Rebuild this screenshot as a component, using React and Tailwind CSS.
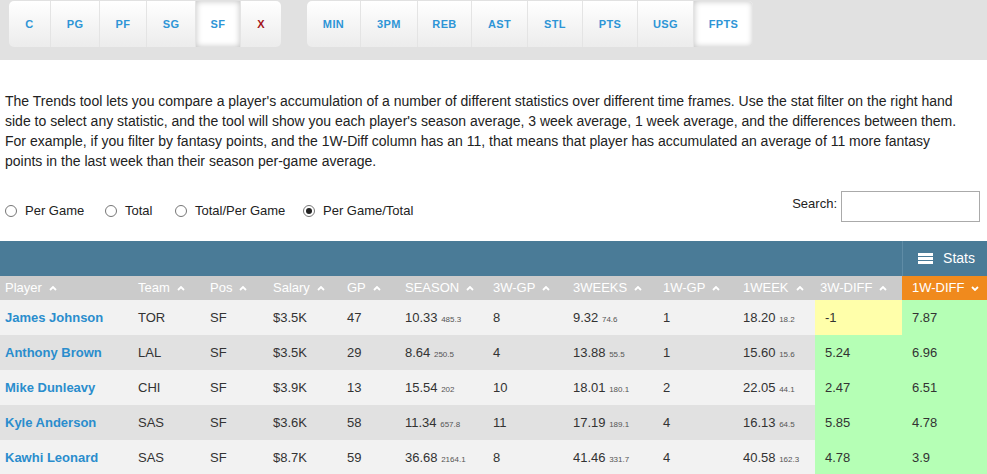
import { useState } from "react";

const POS = [
  { k: "C", w: "w-[41px]" },
  { k: "PG", w: "w-[49px]" },
  { k: "PF", w: "w-[47px]" },
  { k: "SG", w: "w-[49px]" },
  { k: "SF", w: "w-[45px]", on: true },
  { k: "X", w: "w-[41px]", red: true },
];

const STATS = [
  { k: "MIN", w: "w-[53px]" },
  { k: "3PM", w: "w-[57px]" },
  { k: "REB", w: "w-[54px]" },
  { k: "AST", w: "w-[56px]" },
  { k: "STL", w: "w-[55px]" },
  { k: "PTS", w: "w-[55px]" },
  { k: "USG", w: "w-[56px]" },
  { k: "FPTS", w: "w-[60px]", on: true },
];

const COLS = [
  ["Player", 133], ["Team", 72], ["Pos", 63], ["Salary", 74], ["GP", 58], ["SEASON", 88],
  ["3W-GP", 80], ["3WEEKS", 90], ["1W-GP", 80], ["1WEEK", 77], ["3W-DIFF", 87], ["1W-DIFF", 85],
];

const ROWS = [
  { name: "James Johnson", team: "TOR", sal: "$3.5K", gp: 47, s: ["10.33", "485.3"], gp3: 8, w3: ["9.32", "74.6"], gp1: 1, w1: ["18.20", "18.2"], d3: "-1", d1: "7.87" },
  { name: "Anthony Brown", team: "LAL", sal: "$3.5K", gp: 29, s: ["8.64", "250.5"], gp3: 4, w3: ["13.88", "55.5"], gp1: 1, w1: ["15.60", "15.6"], d3: "5.24", d1: "6.96" },
  { name: "Mike Dunleavy", team: "CHI", sal: "$3.9K", gp: 13, s: ["15.54", "202"], gp3: 10, w3: ["18.01", "180.1"], gp1: 2, w1: ["22.05", "44.1"], d3: "2.47", d1: "6.51" },
  { name: "Kyle Anderson", team: "SAS", sal: "$3.6K", gp: 58, s: ["11.34", "657.8"], gp3: 11, w3: ["17.19", "189.1"], gp1: 4, w1: ["16.13", "64.5"], d3: "5.85", d1: "4.78" },
  { name: "Kawhi Leonard", team: "SAS", sal: "$8.7K", gp: 59, s: ["36.68", "2164.1"], gp3: 8, w3: ["41.46", "331.7"], gp1: 4, w1: ["40.58", "162.3"], d3: "4.78", d1: "3.9" },
];

const MODES = [
  { k: "Per Game", w: "w-[100px]" },
  { k: "Total", w: "w-[70px]" },
  { k: "Total/Per Game", w: "w-[128px]" },
  { k: "Per Game/Total", w: "w-auto" },
];

const Caret = ({ down }) => (
  <svg width="8" height="5" viewBox="0 0 8 5" className="inline-block ml-[7px] align-middle">
    <polyline points={down ? "1,1 4,4 7,1" : "1,4 4,1 7,4"} fill="none" stroke="white" strokeWidth="1.8" />
  </svg>
);

const Num = ({ v }) => (
  <span>{v[0]} <span className="text-[8px] text-[#555]">{v[1]}</span></span>
);

function BtnGroup({ items }) {
  return (
    <div className="flex h-[46px] rounded-[5px] overflow-hidden bg-gradient-to-b from-white to-[#ececec]">
      {items.map((b, i) => (
        <div key={b.k}
          className={`${b.w} flex items-center justify-center text-[11px] font-bold tracking-[0.4px] ${i > 0 ? "border-l border-[#e4e4e4]" : ""} ${b.on ? "bg-white shadow-[inset_0_0_6px_rgba(0,0,0,0.25)]" : ""} ${b.red ? "text-[#a3151a]" : "text-[#2e95d6]"}`}>
          {b.k}
        </div>
      ))}
    </div>
  );
}

export default function App() {
  const [mode, setMode] = useState(3);

  return (
    <div className="w-[987px] h-[474px] overflow-hidden bg-white font-['Liberation_Sans',Arial,sans-serif] text-[#222]">
      {/* Filters */}
      <div className="h-[60px] bg-[#e1e1e1] flex items-start gap-[26px] pl-[9px] pt-px">
        <BtnGroup items={POS} />
        <BtnGroup items={STATS} />
      </div>

      {/* Description */}
      <p className="mt-[31px] px-[5px] text-[14px] leading-[20px] text-[#222]">
        The Trends tool lets you compare a player's accumulation of a number of different statistics over different time frames. Use the stat filter on the right hand<br />
        side to select any statistic, and the tool will show you each player's season average, 3 week average, 1 week average, and the differences between them.<br />
        For example, if you filter by fantasy points, and the 1W-Diff column has an 11, that means that player has accumulated an average of 11 more fantasy<br />
        points in the last week than their season per-game average.
      </p>

      {/* Options + search */}
      <div className="flex items-start justify-between mt-[20px] h-[50px] pl-[5px] pr-[7px]">
        <div className="flex items-center mt-[10px] text-[13px] text-[#222]">
          {MODES.map((m, i) => (
            <label key={m.k} className={`${m.w} flex items-center gap-[8px] cursor-pointer`} onClick={() => setMode(i)}>
              <span className="w-[12px] h-[12px] rounded-full border border-[#767676] bg-white flex items-center justify-center">
                {mode === i && <span className="w-[6px] h-[6px] rounded-full bg-[#222]" />}
              </span>
              {m.k}
            </label>
          ))}
        </div>
        <div className="flex items-start gap-[4px] text-[13px]">
          <span className="mt-[3px]">Search:</span>
          <input className="w-[139px] h-[31px] border border-[#aaa] outline-none px-1" />
        </div>
      </div>

      {/* Table */}
      <div className="flex h-[35px] bg-[#4a7b97]">
        <div className="w-[902px]" />
        <div className="flex-1 border-l border-[#5f8ca6] flex items-center justify-end pr-[12px] gap-[10px] text-white text-[14px]">
          <div className="flex flex-col gap-px w-[15px]">
            <span className="h-[3px] bg-white" />
            <span className="h-[3px] bg-white" />
            <span className="h-[3px] bg-white" />
          </div>
          Stats
        </div>
      </div>
      <table className="table-fixed w-[987px] border-collapse text-[13px]">
        <colgroup>
          {COLS.map(([h, w]) => <col key={h} style={{ width: w }} />)}
        </colgroup>
        <thead>
          <tr className="h-[24px] bg-[#cbcbcb] text-white">
            {COLS.map(([h], i) => (
              <th key={h} className={`text-left font-normal pl-[5px] whitespace-nowrap ${i === 11 ? "bg-[#f08a1d] font-bold pl-[10px]" : ""}`}>
                {h}<Caret down={i === 11} />
              </th>
            ))}
          </tr>
        </thead>
        <tbody className="text-[#333]">
          {ROWS.map((r, i) => (
            <tr key={r.name} className={`h-[35px] ${i % 2 ? "bg-[#e1e1e1]" : "bg-[#f2f2f2]"}`}>
              <td className="pl-[5px] font-bold text-[#2a8dcd] whitespace-nowrap">{r.name}</td>
              <td className="pl-[5px]">{r.team}</td>
              <td className="pl-[5px]">SF</td>
              <td className="pl-[5px]">{r.sal}</td>
              <td className="pl-[5px]">{r.gp}</td>
              <td className="pl-[5px] whitespace-nowrap"><Num v={r.s} /></td>
              <td className="pl-[5px]">{r.gp3}</td>
              <td className="pl-[5px] whitespace-nowrap"><Num v={r.w3} /></td>
              <td className="pl-[5px]">{r.gp1}</td>
              <td className="pl-[5px] whitespace-nowrap"><Num v={r.w1} /></td>
              <td className={`pl-[10px] ${r.d3.startsWith("-") ? "bg-[#ffffaa]" : "bg-[#b5ffb5]"}`}>{r.d3}</td>
              <td className="pl-[10px] bg-[#b5ffb5]">{r.d1}</td>
            </tr>
          ))}
        </tbody>
      </table>
    </div>
  );
}
